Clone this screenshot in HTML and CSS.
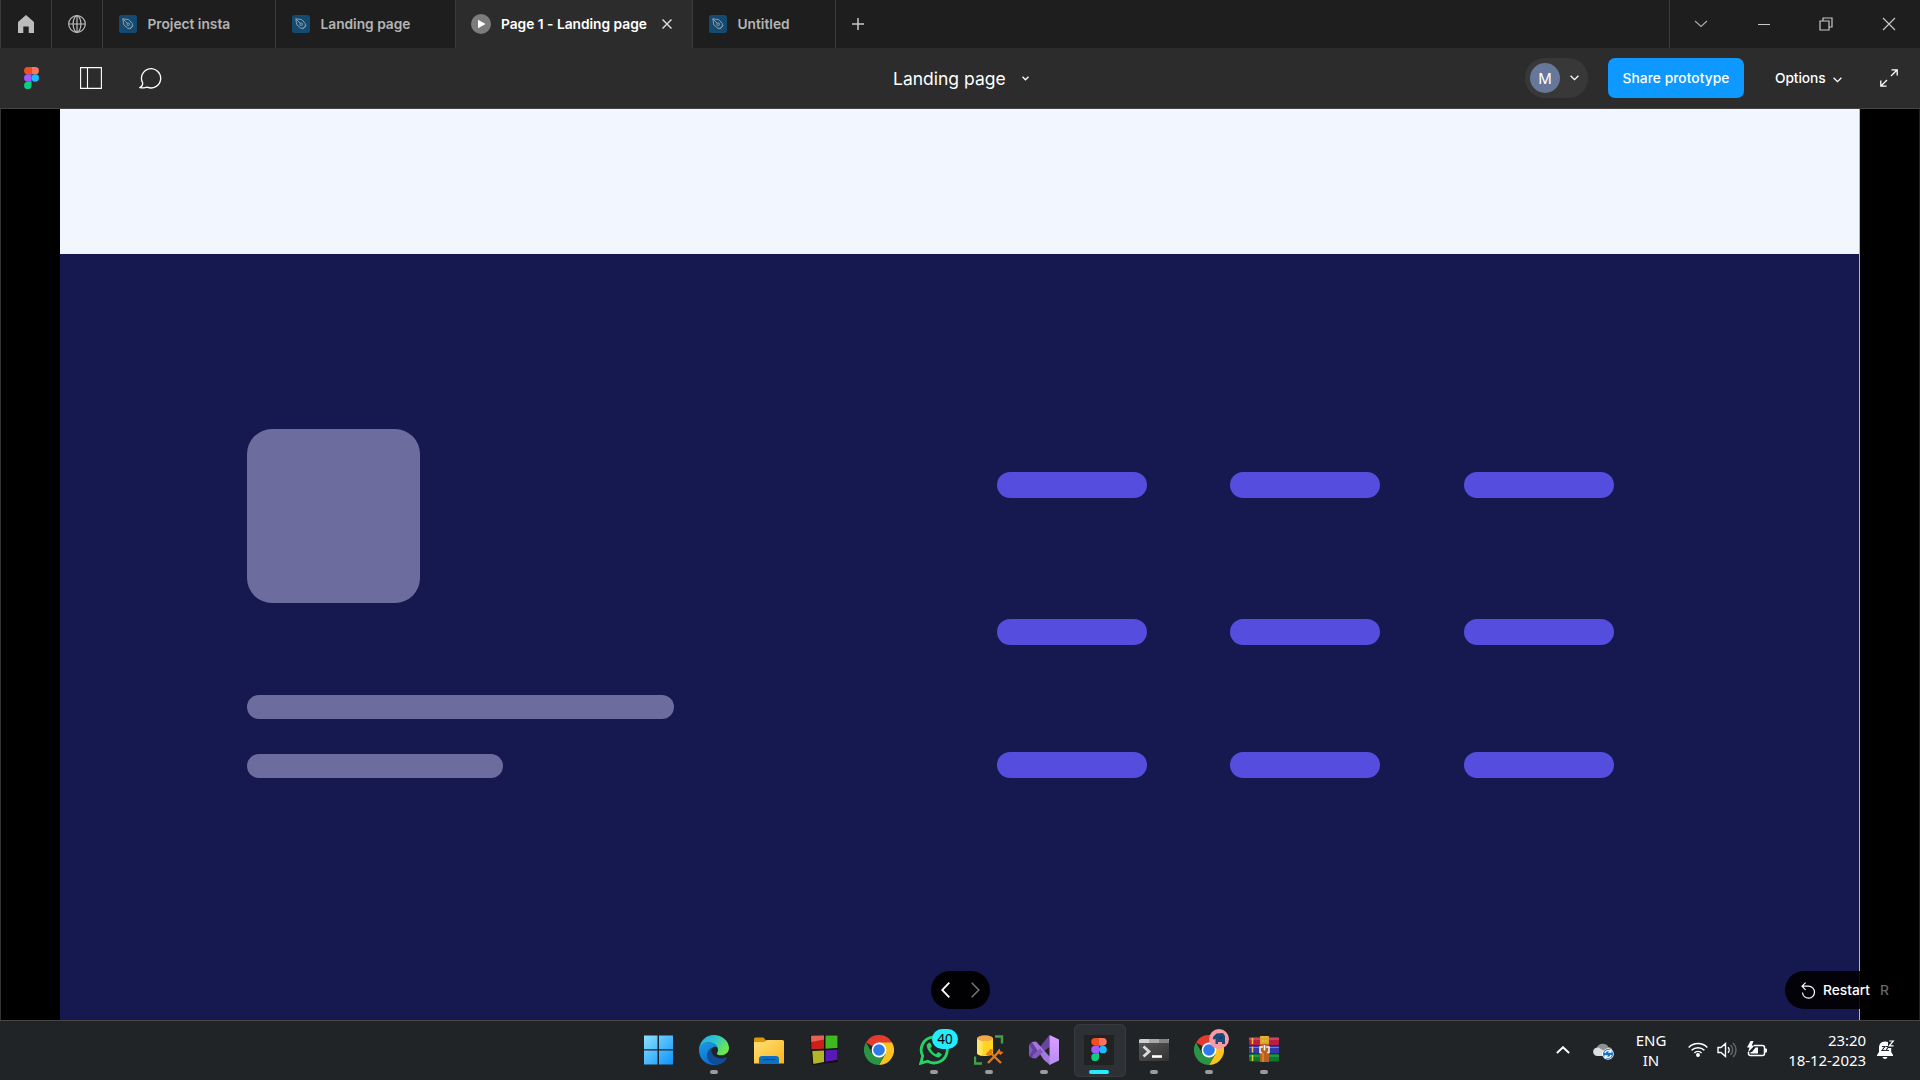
FILE: index.html
```html
<!DOCTYPE html>
<html lang="en">
<head>
<meta charset="utf-8">
<title>Landing page</title>
<link rel="stylesheet" href="styles.css">
</head>
<body>
<svg class="defs" width="0" height="0" aria-hidden="true">
  <defs>
    <symbol id="doc" viewBox="0 0 18 18">
      <rect width="18" height="18" rx="2.5" fill="#144a70"/>
      <g fill="none" stroke="#8fa0ad" stroke-width="1">
        <path d="M3.8 3.8 9.8 4.6 13.4 8.7 13.2 11.3 11.4 13.1 8.9 13.3 4.8 9.8Z"/>
        <path d="M3.8 3.8 8.4 8.4M10.6 14.2 14.2 10.6"/>
        <circle cx="9.2" cy="9.2" r="1.3"/>
      </g>
    </symbol>
    <symbol id="figma" viewBox="0 0 30 44">
      <path d="M7.5 0H15v14.6H7.5a7.3 7.3 0 0 1 0-14.6Z" fill="#f24e1e"/>
      <path d="M15 0h7.5a7.3 7.3 0 0 1 0 14.6H15Z" fill="#ff7262"/>
      <path d="M7.5 14.6H15v14.7H7.5a7.3 7.3 0 0 1 0-14.7Z" fill="#a259ff"/>
      <circle cx="22.5" cy="22" r="7.4" fill="#1abcfe"/>
      <path d="M7.5 29.3H15v7.3a7.4 7.4 0 1 1-7.5-7.3Z" fill="#0acf83"/>
    </symbol>
    <symbol id="chrome" viewBox="0 0 30 30">
      <path d="M15 15 2 7.5A15 15 0 0 1 28 7.5Z" fill="#e33b2e"/>
      <path d="M15 15V7.5H28A15 15 0 0 1 15 30L21.5 18.7Z" fill="#fcc31e"/>
      <path d="M15 15 8.5 18.7 2 7.5A15 15 0 0 0 15 30L21.5 18.7Z" fill="#2a9444"/>
      <circle cx="15" cy="15" r="7.4" fill="#fff"/>
      <circle cx="15" cy="15" r="5.8" fill="#2d7bea"/>
    </symbol>
    <linearGradient id="winGrad" x1="0" y1="0" x2="1" y2="1"><stop offset="0" stop-color="#8ce0ff"/><stop offset="1" stop-color="#0a94fb"/></linearGradient>
    <linearGradient id="edgeTop" x1="0" y1="0" x2="1" y2=".5"><stop offset="0" stop-color="#2aa7e4"/><stop offset=".5" stop-color="#2bc3d2"/><stop offset="1" stop-color="#6fe84b"/></linearGradient>
    <linearGradient id="edgeBody" x1="0" y1="0" x2=".6" y2="1"><stop offset="0" stop-color="#1b9de2"/><stop offset="1" stop-color="#0668cf"/></linearGradient>
    <linearGradient id="folderGrad" x1="0" y1="0" x2="1" y2="1"><stop offset="0" stop-color="#ffe07a"/><stop offset="1" stop-color="#fbb61a"/></linearGradient>
    <linearGradient id="termGrad" x1="0" y1="0" x2="1" y2="1"><stop offset="0" stop-color="#555"/><stop offset="1" stop-color="#333"/></linearGradient>
    <linearGradient id="vsGrad" x1="0" y1="0" x2="0" y2="1"><stop offset="0" stop-color="#d9a0ff"/><stop offset="1" stop-color="#b98bf2"/></linearGradient>
  </defs>
</svg>

<header class="tabs">
  <div class="tab tab-icon">
    <svg width="16" height="18" viewBox="0 0 16 18"><path d="M8 0 16 7V18H10.7V11.5H5.3V18H0V7Z" fill="#bcbcbc"/></svg>
  </div>
  <div class="tab tab-icon">
    <svg width="18" height="18" viewBox="0 0 18 18" fill="none" stroke="#bcbcbc" stroke-width="1.2"><circle cx="9" cy="9" r="8.3"/><ellipse cx="9" cy="9" rx="3.9" ry="8.3"/><path d="M.7 9h16.6M9 .7v16.6"/></svg>
  </div>
  <div class="tab tab-project"><svg width="18" height="18"><use href="#doc"/></svg><span>Project insta</span></div>
  <div class="tab tab-landing"><svg width="18" height="18"><use href="#doc"/></svg><span>Landing page</span></div>
  <div class="tab tab-active">
    <svg width="20" height="20" viewBox="0 0 20 20"><circle cx="10" cy="10" r="10" fill="#7c7c7c"/><path d="M7 5.8v8.4L14.6 10Z" fill="#fff"/></svg>
    <span>Page 1 - Landing page</span>
    <svg class="tab-close" width="10" height="10" viewBox="0 0 10 10" stroke="#d6d6d6" stroke-width="1.5"><path d="M.5.5l9 9M9.5.5l-9 9"/></svg>
  </div>
  <div class="tab tab-untitled"><svg width="18" height="18"><use href="#doc"/></svg><span>Untitled</span></div>
  <svg class="new-tab" width="12" height="12" viewBox="0 0 12 12" stroke="#c8c8c8" stroke-width="1.5"><path d="M6 0v12M0 6h12"/></svg>
  <div class="window-controls">
    <svg width="14" height="8" viewBox="0 0 14 8" fill="none" stroke="#a8a8a8" stroke-width="1.2"><path d="M1 1l6 5.5L13 1"/></svg>
    <svg width="14" height="14" viewBox="0 0 14 14" stroke="#c8c8c8"><path d="M1 7.5h12"/></svg>
    <svg width="14" height="14" viewBox="0 0 14 14" fill="none" stroke="#c8c8c8" stroke-width="1.2"><path d="M1 4h9v9H1ZM4 4V1h9v9h-3"/></svg>
    <svg width="14" height="14" viewBox="0 0 14 14" stroke="#c8c8c8" stroke-width="1.2"><path d="M1 1l12 12M13 1L1 13"/></svg>
  </div>
</header>

<nav class="toolbar">
  <div class="tools">
    <svg width="15" height="22"><use href="#figma"/></svg>
    <svg class="tool-sidebar" width="22" height="22" viewBox="0 0 22 22" fill="none" stroke="#fff" stroke-width="1.1"><path d="M.6.6h20.8v20.8H.6ZM7.5.6v20.8"/></svg>
    <svg class="tool-comment" width="24" height="22" viewBox="0 0 24 22" fill="none" stroke="#fff" stroke-width="1.3"><path d="M1 20.5c2-.8 2.8-2.4 2.7-4.5A9.6 9.6 0 1 1 8.2 20.1C6 21 3.5 21 1 20.5Z"/></svg>
  </div>
  <div class="title">
    <span>Landing page</span>
    <svg width="7" height="5" viewBox="0 0 7 5" fill="none" stroke="#fff" stroke-width="1.3"><path d="M.5.8l3 3 3-3"/></svg>
  </div>
  <div class="actions">
    <div class="user">
      <div class="avatar">M</div>
      <svg width="9" height="6" viewBox="0 0 9 6" fill="none" stroke="#fff" stroke-width="1.3"><path d="M.6.8l3.9 3.8L8.4.8"/></svg>
    </div>
    <div class="share">Share prototype</div>
    <div class="options">
      <span>Options</span>
      <svg width="9" height="6" viewBox="0 0 9 6" fill="none" stroke="#fff" stroke-width="1.3"><path d="M.6.8l3.9 3.8L8.4.8"/></svg>
    </div>
    <svg class="expand" width="18" height="18" viewBox="0 0 18 18" fill="none" stroke="#fff" stroke-width="1.3"><path d="M11.5.8h5.7v5.7M17 1l-6 6M.8 11.5v5.7h5.7M1 17l6-6"/></svg>
  </div>
</nav>

<main class="stage">
  <div class="page">
    <section class="page-top"></section>
    <footer class="page-footer">
      <div class="brand">
        <div class="logo-block"></div>
        <div class="line line-long"></div>
        <div class="line line-short"></div>
      </div>
      <div class="links">
        <i></i><i></i><i></i>
        <i></i><i></i><i></i>
        <i></i><i></i><i></i>
      </div>
    </footer>
  </div>
  <div class="pager">
    <svg width="9" height="16" viewBox="0 0 9 16" fill="none" stroke="#fff" stroke-width="1.8"><path d="M8.3.7 1.2 8l7.1 7.3"/></svg>
    <svg width="9" height="16" viewBox="0 0 9 16" fill="none" stroke="#777" stroke-width="1.5"><path d="M.7.7 7.8 8 .7 15.3"/></svg>
  </div>
  <div class="restart">
    <svg width="15" height="17" viewBox="0 0 15 17" fill="none" stroke="#fff" stroke-width="1.2"><path d="M4.6.6 1 4.2l3.6 3.6M1 4.2h6.500a6 6 0 1 1-6 6.3"/></svg>
    <span>Restart</span><kbd>R</kbd>
  </div>
</main>

<div class="taskbar">
  <div class="apps">
    <div class="app"><svg width="30" height="30" viewBox="0 0 30 30"><path d="M0 .5H13.500v13.800H0ZM15 .5h14v13.800h-14ZM0 15.500H13.500v14H0ZM15 15.500h14v14h-14Z" fill="url(#winGrad)"/></svg></div>
    <div class="app running"><svg width="30" height="30" viewBox="0 0 30 30">
      <path d="M0 14C1 6 7 0 15 0s15 6 15 13c0 4.500-3.500 7.200-8 7.200-2.500 0-4.200-.8-4-1.800.3-1 1.200-1.600 1-3.800C18.600 10 14 7.500 9.500 7.500 5 7.500 1.500 10 0 14Z" fill="url(#edgeTop)"/>
      <path d="M0 15C0 10 4 7.300 9.500 7.300c4 0 7.500 1.700 9 4.700-3-1.200-7 .5-7.300 5-.3 5 4.800 9 10 9 2.500 0 4.500-.6 6-1.500C24.500 28 20 30 15 30 7 30 0 24 0 15Z" fill="url(#edgeBody)"/>
      <path d="M12.500 12.800C10 14 8 17 8 20.500c0 5 4 9 9 9.300 5-.5 8.800-3.300 10.800-6.800.3-.7-.2-1-.7-.7-5.500 2.500-12 1-14-4-.8-2-.9-3.700-.6-5.500Z" fill="#0f4d96"/></svg></div>
    <div class="app"><svg width="30" height="30" viewBox="0 0 30 30">
      <path d="M0 4a1.500 1.500 0 0 1 1.500-1.500h8L12.500 6H20v6H0Z" fill="#dc9800"/>
      <path d="M0 7h10l3-2h15.500A1.500 1.500 0 0 1 30 6.500v22H0Z" fill="url(#folderGrad)"/>
      <path d="M5 29v-5a3 3 0 0 1 3-3h14a3 3 0 0 1 3 3v5Z" fill="#0d70c4"/><path d="M9 24.500h12" stroke="#0a4c8c" stroke-width="1.2"/></svg></div>
    <div class="app"><svg width="30" height="30" viewBox="0 0 30 30">
      <path d="M1 0h28v27L3 30Z" fill="#111"/><path d="M2 .8 15 .5v13.300L2.500 14.500Z" fill="#cb2019"/><path d="M2 .8 15 .5v4L2.300 7Z" fill="#e8604f"/><path d="M16.500.5h12v12.500l-12 .7Z" fill="#3fb91f"/><path d="M3.300 16l11.700-.5V27L4.300 29Z" fill="#b3b526"/><path d="M16.500 15.200l12-.8v10.300l-12 2Z" fill="#5a18b5"/></svg></div>
    <div class="app"><svg width="30" height="30"><use href="#chrome"/></svg></div>
    <div class="app running"><svg width="30" height="30" viewBox="0 0 30 30"><path d="M1.700 28.300l2-7.300a13 13 0 1 1 5 5.200Z" fill="none" stroke="#25d366" stroke-width="2.8"/><path d="M10 7.500 7.800 9.800c-.7 5.200 6.700 13 12.500 12.800l2.700-2.800c.2-.6-3.500-2.800-4.200-2.500l-1.700 2c-1.800-.5-5.100-3.700-5.800-6l1.500-1.800c.2-.8-1.400-4.200-2.800-4Z" fill="#25d366"/></svg><span class="badge">40</span></div>
    <div class="app running"><svg width="30" height="30" viewBox="0 0 30 30">
      <path d="M3 3v15c0 2 4 3 8 3s8-1 8-3V3Z" fill="#ffd51f"/><path d="M3 3v15c0 1.500 2.500 2.500 5.500 2.800V3Z" fill="#ffe566"/><ellipse cx="11" cy="3.200" rx="8" ry="2.900" fill="#f0a94a"/>
      <path d="M21 1.500h7v7M1 21.500v7h7" fill="none" stroke="#42a148" stroke-width="2.4"/>
      <path d="M14 28 25.500 16M15.500 17 27 28" stroke="#e77817" stroke-width="2.4"/><path d="M11.500 19.500l5-5.500 3.500 1-5.500 6ZM23 16.500l2.500-3 1 3 3 .5-3 3Z" fill="#e77817"/></svg></div>
    <div class="app running"><svg width="30" height="30" viewBox="0 0 30 30">
      <path d="M0 9.500 2.800 7l5.200 4 3 4-8.200 8L0 21Z" fill="#66409e"/><path d="M20.500 0v12L14 17l-4-4Z" fill="#69459f"/><path d="M0 21V9.500L4 15Z" fill="#8159bd"/><path d="M2.800 7 7 6.500 22 23l-1 7-6-5Z" fill="#a477dd"/><path d="M4 20 2.800 23l4.200.5L14 17l-3-3.500Z" fill="#8358bd"/><path d="M20.500 0 30 4.500v21L20.500 30Z" fill="url(#vsGrad)"/></svg></div>
    <div class="app running current"><div class="figma-tile"><svg width="16" height="23"><use href="#figma"/></svg></div></div>
    <div class="app running"><svg width="30" height="30" viewBox="0 0 30 30">
      <path d="M0 5.500a1.500 1.500 0 0 1 1.500-1.500H30v4H0Z" fill="#cfcfd1"/><path d="M10 4h10v4H10Z" fill="#aaa"/><path d="M20 4h8.500A1.500 1.500 0 0 1 30 5.500V8H20Z" fill="#858585"/><path d="M0 8h30v16.500a1.500 1.500 0 0 1-1.500 1.500h-27A1.500 1.500 0 0 1 0 24.500Z" fill="url(#termGrad)"/><path d="M4.500 11.500 10 16.500l-5.500 5" fill="none" stroke="#ddd" stroke-width="2.8"/><path d="M13 21.500h10" stroke="#fff" stroke-width="2.6"/></svg></div>
    <div class="app running"><svg width="30" height="30"><use href="#chrome"/></svg>
      <span class="profile"><svg width="20" height="20" viewBox="0 0 20 20"><circle cx="10" cy="10" r="10" fill="#f79ba4"/><path d="M4 8 6 6l1.500-1.500L14 4l2 3v8h-3v-2H9v2H6.500v-5L4 10.500Z" fill="#174a78"/><path d="M10.500 9h3" stroke="#0c2d50"/></svg></span></div>
    <div class="app running"><svg width="30" height="30" viewBox="0 0 30 30">
      <rect y="2" width="30" height="8" rx="1" fill="#b91e45"/><path d="M0 4h30" stroke="#e66280"/>
      <rect y="10.500" width="30" height="8" rx="1" fill="#3436aa"/><path d="M0 12.500h30" stroke="#7378e0"/>
      <rect y="19" width="30" height="7.500" rx="1" fill="#0c7730"/><path d="M0 21h30" stroke="#39b45b"/>
      <path d="M3.500 3v6M3.500 11.500v6M3.500 20v6" stroke="#efc83c" stroke-width="1.5"/>
      <path d="M11 1h9v26h-9Z" fill="#b9601e"/><path d="M11 1h9v8h-9Z" fill="#dba52d"/><path d="M14 1v8M17 1v8" stroke="#f2c45a" stroke-dasharray="2 2"/><path d="M14 18v9" stroke="#dc8a3c" stroke-width="1.5"/>
      <path d="M14 12h-3v5.500h2M17 12h3v5.500h-2" fill="none" stroke="#eee" stroke-width="1.6"/><path d="M15.500 10v5.500" stroke="#fff" stroke-width="1.6"/></svg></div>
  </div>
  <div class="tray">
    <svg width="14" height="8" viewBox="0 0 14 8" fill="none" stroke="#fff" stroke-width="1.9"><path d="M.9 7 7 1.200 13.100 7"/></svg>
    <svg class="tray-cloud" width="21" height="18" viewBox="0 0 21 18"><path d="M4.500 14A4.300 4.300 0 0 1 4 5.400 6.500 6.500 0 0 1 15.500 5c3 .3 4 2.200 4 5V14Z" fill="#8e9092"/><path d="M4.500 14a4.200 4.200 0 1 1 3-7.300C11 8 13 11 14 14Z" fill="#dedede"/><circle cx="15" cy="12" r="5.800" fill="#fff"/><circle cx="15" cy="12" r="5" fill="#1672c9"/><path d="M11.800 11a3.400 3.400 0 0 1 6-1.200M18.200 13a3.400 3.400 0 0 1-6 1.200M18 7.500v2.700h-2.800M12 16.500v-2.700h2.800" fill="none" stroke="#fff" stroke-width="1.3"/></svg>
    <div class="lang"><span>ENG</span><span>IN</span></div>
    <svg class="tray-wifi" width="20" height="15" viewBox="0 0 20 15" fill="none" stroke="#fff" stroke-width="1.5"><path d="M.7 5.500a13 13 0 0 1 18.600 0M3.600 8.300a9 9 0 0 1 12.800 0M6.400 11a5.200 5.200 0 0 1 7.200 0"/><circle cx="10" cy="13" r="1.200" fill="#fff"/></svg>
    <svg class="tray-volume" width="21" height="16" viewBox="0 0 21 16" fill="none" stroke="#fff" stroke-width="1.4"><path d="M1 5.500h3L8.500 1.500v13L4 10.500H1ZM11 5.200a4 4 0 0 1 0 5.600"/><path d="M13.500 3a7 7 0 0 1 0 10M16 .9a10 10 0 0 1 0 14.200" stroke="#666"/></svg>
    <svg class="tray-battery" width="21" height="17" viewBox="0 0 21 17"><path d="M7 4.500h8.500a2 2 0 0 1 2 2v6a2 2 0 0 1-2 2H3.500a2 2 0 0 1-2-2V11" fill="none" stroke="#fff" stroke-width="1.5"/><path d="M18 7.500h1.200a.8.8 0 0 1 .8.800v2.400a.8.8 0 0 1-.8.800H18ZM8.500 6.500H11v6H3.500V11H5ZM3.500 0 0 6.500h2.500L1 11.500 7.500 4.500H4.800L6.500 0Z" fill="#fff"/></svg>
    <div class="clock"><span>23:20</span><span>18-12-2023</span></div>
    <svg class="tray-bell" width="18" height="20" viewBox="0 0 18 20"><path d="M8 1.500c-4 0-6 2.800-6 6V12L0 15v1h16v-1l-1.800-3V8H11V1.900A8 8 0 0 0 8 1.500ZM5.500 17a2.600 2.600 0 0 0 5 0Z" fill="#fff"/><path d="M5 6.500h3L5 10.500h3.200M9 6.500h2.600L9 10.500h3" fill="none" stroke="#202428" stroke-width="1.1"/><path d="M12.300 1h4l-4 4.800h4.200" fill="none" stroke="#fff" stroke-width="1.2"/></svg>
  </div>
</div>
</body>
</html>
```
FILE: styles.css
```css
* { box-sizing: border-box; }
body {
  margin: 0;
  width: 1920px;
  height: 1080px;
  overflow: hidden;
  display: flex;
  flex-direction: column;
  background: #000;
  color: #fff;
  font-family: Inter, "Liberation Sans", sans-serif;
  font-size: 13.75px;
}
svg { display: block; flex: none; }
.defs { position: absolute; }

/* Tab strip */
.tabs {
  height: 48px;
  flex: none;
  display: flex;
  align-items: center;
  background: #1e1e1e;
  border-left: 1px solid #3a3a3a;
}
.tab {
  height: 48px;
  display: flex;
  align-items: center;
  flex: none;
  padding-left: 16px;
  gap: 10.5px;
  border-right: 1px solid #3c3c3c;
  color: #b4b4b4;
  font-weight: 600;
  letter-spacing: -0.01px;
  white-space: nowrap;
}
.tab-icon { width: 51px; padding: 0; justify-content: center; }
.tab-project { width: 173px; }
.tab-landing { width: 180px; }
.tab-active { width: 237px; padding-left: 15px; gap: 10px; background: #2c2c2c; color: #fff; }
.tab-close { margin-left: 5.5px; }
.tab-untitled { width: 143px; }
.new-tab { margin-left: 16px; }
.window-controls {
  width: 251px;
  height: 48px;
  margin-left: auto;
  padding: 0 24px 0 24px;
  display: flex;
  align-items: center;
  justify-content: space-between;
  border-left: 1px solid #3c3c3c;
}

/* Prototype toolbar */
.toolbar {
  height: 61px;
  flex: none;
  display: grid;
  grid-template-columns: 893px 632px 1fr;
  background: #2c2c2c;
  border-bottom: 1px solid #444;
}
.tools { display: flex; align-items: center; padding-left: 24px; }
.tool-sidebar { margin-left: 41px; }
.tool-comment { margin-left: 37px; }
.title { display: flex; align-items: center; gap: 16px; font-size: 17.5px; }
.actions { display: flex; align-items: center; }
.user {
  width: 63px;
  height: 40px;
  padding-left: 5px;
  display: flex;
  align-items: center;
  gap: 9.5px;
  border-radius: 20px;
  background: #383838;
}
.avatar {
  width: 30px;
  height: 30px;
  display: grid;
  place-items: center;
  border-radius: 50%;
  background: #667799;
  font-size: 15px;
}
.share {
  width: 136px;
  height: 40px;
  margin-left: 20px;
  display: grid;
  place-items: center;
  border-radius: 7px;
  background: #0d99ff;
  font-weight: 500;
  letter-spacing: 0.06px;
  white-space: nowrap;
}
.options { width: 67px; margin-left: 31px; display: flex; align-items: center; justify-content: space-between; font-weight: 500; letter-spacing: -0.1px; }
.options svg { margin-top: 3px; }
.expand { margin-left: 38px; }

/* Prototype stage */
.stage {
  position: relative;
  height: 911px;
  flex: none;
  padding: 0 60px 0 59px;
  border-left: 1px solid #333;
  border-right: 1px solid #222;
  background: #000;
}
.page { width: 1800px; height: 911px; border-right: 1px solid #b3b3c6; }
.page-top { height: 145px; background: #f2f6ff; }
.page-footer {
  height: 766px;
  display: grid;
  grid-template-columns: 750px 1fr;
  padding-left: 187px;
  background: #16194f;
}
.brand { padding-top: 175px; }
.logo-block { width: 173.4px; height: 174px; border-radius: 25px; background: #6c6c9e; }
.line { height: 24px; border-radius: 12px; background: #6c6c9e; }
.line-long { width: 427px; margin-top: 92px; }
.line-short { width: 256px; margin-top: 35px; }
.links {
  padding-top: 217.6px;
  display: grid;
  grid-template-columns: repeat(3, 150px);
  grid-template-rows: 147.4px 132.6px 26px;
  column-gap: 83.4px;
  align-content: start;
}
.links i { height: 26px; border-radius: 13px; background: #554ddd; }

/* Controls floating over the stage */
.pager {
  position: absolute;
  left: 930px;
  bottom: 11px;
  width: 59px;
  height: 38px;
  padding: 0 10px;
  display: flex;
  align-items: center;
  justify-content: space-between;
  border-radius: 19px;
  background: rgba(0, 0, 0, 0.95);
}
.restart {
  position: absolute;
  right: 15px;
  bottom: 11px;
  width: 119px;
  height: 38px;
  padding-left: 16px;
  display: flex;
  align-items: center;
  border-radius: 19px;
  background: rgba(0, 0, 0, 0.9);
  font-weight: 500;
}
.restart span { width: 57px; margin-left: 7px; }
.restart kbd { font: inherit; color: #666; }

/* Windows taskbar */
.taskbar {
  height: 60px;
  flex: none;
  display: flex;
  align-items: stretch;
  padding-left: 631px;
  border-top: 1px solid #464646;
  background: #202427;
  font-family: "Noto Sans", "Open Sans", sans-serif;
}
.apps { display: flex; width: 660px; }
.app {
  position: relative;
  width: 55px;
  padding-bottom: 2px;
  display: flex;
  align-items: center;
  justify-content: center;
}
.app.running::after {
  content: "";
  position: absolute;
  left: 24px;
  bottom: 6px;
  width: 8px;
  height: 4px;
  border-radius: 2px;
  background: #9b9b9b;
}
.app.current::before {
  content: "";
  position: absolute;
  left: 3px;
  top: 3px;
  width: 50px;
  height: 51px;
  border: 1px solid #373b3f;
  border-radius: 5px;
  background: #2d3135;
}
.app.current::after { left: 18px; width: 20px; background: #23ecff; }
.figma-tile {
  position: relative;
  width: 30px;
  height: 30px;
  display: grid;
  place-items: center;
  background: #222;
}
.badge {
  position: absolute;
  left: 26px;
  top: 8px;
  width: 26px;
  height: 20px;
  border-radius: 10px;
  background: #23ecff;
  color: #000;
  font-size: 13.5px;
  line-height: 20px;
  text-align: center;
}
.profile { position: absolute; left: 28px; top: 8px; }

.tray { flex: 1; display: flex; align-items: center; padding: 0 0 2px 265px; font-size: 15px; }
.tray-cloud { margin: 3px 0 0 23px; }
.lang, .clock { display: flex; flex-direction: column; line-height: 20px; }
.lang { width: 40px; margin-left: 17px; align-items: center; }
.tray-wifi { margin-left: 17px; }
.tray-volume { margin-left: 9px; }
.tray-battery { margin-left: 9px; }
.clock { width: 86px; margin-left: 12px; align-items: flex-end; letter-spacing: -0.05px; }
.tray-bell { margin-left: 11px; }
```
